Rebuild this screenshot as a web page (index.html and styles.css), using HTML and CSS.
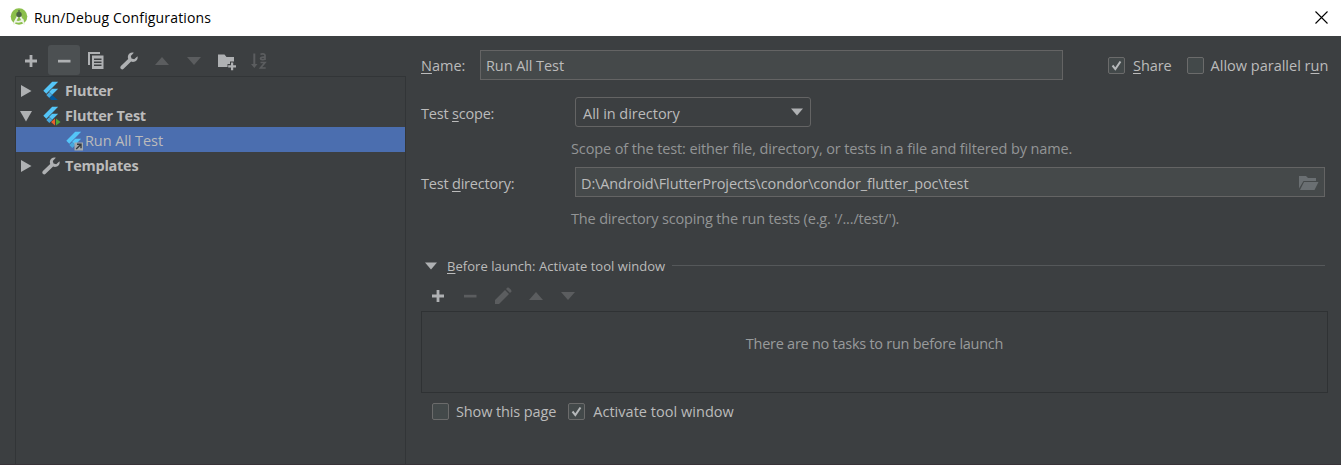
FILE: index.html
```html
<!DOCTYPE html>
<html lang="en">
<head>
<meta charset="utf-8">
<title>Run/Debug Configurations</title>
<link rel="stylesheet" href="styles.css">
</head>
<body>
<svg width="0" height="0" class="defs">
  <symbol id="plus" viewBox="0 0 20 20"><path d="M8.600 4h2.800v4.600H16v2.800h-4.600V16H8.600v-4.600H4V8.600h4.600z"/></symbol>
  <symbol id="minus" viewBox="0 0 20 20"><path d="M4 8.800h12.500v2.700H4z"/></symbol>
  <symbol id="up" viewBox="0 0 20 20"><path d="M10 6l7 8H3z"/></symbol>
  <symbol id="down" viewBox="0 0 20 20"><path d="M3 6h14l-7 8z"/></symbol>
  <symbol id="wrench" viewBox="0 0 20 20"><path d="M18.500 5.300l-3.300 2.900-2.700-.6-.7-2.700 3-3.200C12.300.9 9.300 2.300 8.900 5.200c-.2 1 0 1.900.3 2.700L1.900 15c-.8.9-.8 2 0 2.800s1.900.8 2.700 0l7.500-7.200c3.700 1.300 7.400-1.500 6.400-5.300z"/></symbol>
  <symbol id="flutter-wings" viewBox="0 0 20 20">
    <path fill="#54c5f8" d="M11.200.8h6L5.300 12.700 2.300 9.700z"/>
    <path fill="#54c5f8" d="M11.200 7.800h6l-6 6-3-3z"/>
    <path fill="#46a9de" d="M5.300 14.100l3-3 3 3-3 3z"/>
  </symbol>
</svg>

<header class="titlebar">
  <svg class="logo" viewBox="0 0 20 20">
    <circle cx="10" cy="9.500" r="8.300" fill="#8bbf4b"/>
    <path fill="none" stroke="#eef3e8" stroke-width="1.800" d="M9 9L4.500 17.500M11 9l4.500 8.500M5.500 13.500c3 2 6 2 9-1"/>
    <circle cx="10" cy="7.500" r="2.700" fill="#4d6543"/><path stroke="#4d6543" stroke-width="1.300" d="M10 3v5"/>
  </svg>
  <h1 class="title">Run/Debug Configurations</h1>
  <svg class="close" viewBox="0 0 13 13"><path fill="none" stroke="#000" stroke-width="1.100" d="M.5.5l12 12M12.500.5l-12 12"/></svg>
</header>

<main class="dialog">
  <aside class="sidebar">
    <div class="toolbar">
      <span class="tool"><svg><use href="#plus"/></svg></span>
      <span class="tool hover"><svg><use href="#minus"/></svg></span>
      <span class="tool"><svg viewBox="0 0 20 20"><path d="M2 1h12v2H4v11H2z"/><path fill-rule="evenodd" d="M6 4.500h11.500v13.500H6zM8 7.500v1.500h7.500V7.500zm0 3v1.500h7.500v-1.500zm0 3V15h7.500v-1.500z"/></svg></span>
      <span class="tool"><svg><use href="#wrench"/></svg></span>
      <span class="tool off"><svg><use href="#up"/></svg></span>
      <span class="tool off"><svg><use href="#down"/></svg></span>
      <span class="tool"><svg viewBox="0 0 20 20"><path d="M1 3.500h6.500l2 2.500H17v4.500h-4V13h-2.500v3H1z"/><path d="M14 11.500h2.200V14.200H19v2.200h-2.800v2.800H14v-2.800h-2.800v-2.200H14z"/></svg></span>
      <span class="tool off"><svg viewBox="0 0 20 20"><path d="M4.300 2.500h2V13h2.200l-3.200 4L2 13h2.300z"/><path class="sort-line" d="M11.500 3.500c1-1 4.500-1 4.500.8V9m0-2.800c-2-.2-4.500 0-4.500 1.400s3.500 1.700 4.500 0M11.500 11.500h4.500L11.500 17h5.200"/></svg></span>
    </div>
    <ul class="tree">
      <li class="node"><svg class="arrow" viewBox="0 0 12 12"><path d="M1 0l10.500 6L1 12z"/></svg><svg class="node-icon" viewBox="0 0 20 20"><use href="#flutter-wings"/><path fill="#01579b" d="M8.300 17.100l3-3 5.500 5h-6.500z"/></svg><b>Flutter</b></li>
      <li class="node"><svg class="arrow" viewBox="0 0 12 12"><path d="M0 1h12L6 11.500z"/></svg><svg class="node-icon" viewBox="0 0 20 20"><use href="#flutter-wings"/><path fill="#e8602c" d="M14 12.500v7L10 16z"/><path fill="#4fa836" d="M15 12.500v7l4.500-3.500z"/></svg><b>Flutter Test</b></li>
      <li class="node selected"><svg class="node-icon" viewBox="0 0 20 20"><use href="#flutter-wings"/><path fill="#a3a8ac" d="M10.500 11.500h8.500v8h-8.500z"/><path fill="none" stroke="#343a40" stroke-width="1.400" d="M12.200 18l4.500-4.500M13 13.200h4v4"/></svg><span class="t-run">Run All Test</span></li>
      <li class="node"><svg class="arrow" viewBox="0 0 12 12"><path d="M1 0l10.500 6L1 12z"/></svg><svg class="node-icon"><use href="#wrench"/></svg><b>Templates</b></li>
    </ul>
  </aside>

  <section class="editor">
    <div class="name-row">
      <label class="label-name"><u>N</u>ame:</label>
      <div class="field name-field"><span class="t-name">Run All Test</span></div>
      <span class="check share"><i class="box"><svg viewBox="0 0 17 17"><path d="M4 8.500l3.200 4L13 4"/></svg></i><span class="t-share"><u>S</u>hare</span></span>
      <span class="check"><i class="box"></i><span>Allow parallel r<u>u</u>n</span></span>
    </div>
    <div class="form-row">
      <label>Test <u>s</u>cope:</label>
      <div class="select"><span>All in directory</span><svg viewBox="0 0 12 8"><path d="M0 .5h12L6 7.500z"/></svg></div>
    </div>
    <p class="hint">Scope of the test: either file, directory, or tests in a file and filtered by name.</p>
    <div class="form-row dir-row">
      <label>Test <u>d</u>irectory:</label>
      <div class="field dir-field"><span class="t-path">D:\Android\FlutterProjects\condor\condor_flutter_poc\test</span><svg viewBox="0 0 20 16"><path d="M0 1h7l2 2h8v3H4.500L0 13.500z"/><path d="M5 7h14.500l-4 8H1z"/></svg></div>
    </div>
    <p class="hint hint-dir">The directory scoping the run tests (e.g. '/.../test/').</p>
    <div class="divider"><svg viewBox="0 0 12 8"><path d="M0 .5h12L6 7.500z"/></svg><span class="t-before"><u>B</u>efore launch: Activate tool window</span><hr></div>
    <div class="toolbar tasks-bar">
      <span class="tool"><svg><use href="#plus"/></svg></span>
      <span class="tool off"><svg><use href="#minus"/></svg></span>
      <span class="tool off"><svg viewBox="0 0 20 20"><path d="M2 14L12 4l4 4L6 18H2zM13 3l1.500-1.500c1-.8 4.800 3 4 4L17 7z"/></svg></span>
      <span class="tool off"><svg><use href="#up"/></svg></span>
      <span class="tool off"><svg><use href="#down"/></svg></span>
    </div>
    <div class="tasks"><span>There are no tasks to run before launch</span></div>
    <div class="options">
      <span class="check"><i class="box"></i><span class="t-show">Show this page</span></span>
      <span class="check"><i class="box"><svg viewBox="0 0 17 17"><path d="M4 8.500l3.200 4L13 4"/></svg></i><span class="t-activate">Activate tool window</span></span>
    </div>
  </section>
</main>
</body>
</html>
```
FILE: styles.css
```css
* { box-sizing: border-box; }
body {
  margin: 0; height: 465px; overflow: hidden;
  display: flex; flex-direction: column;
  background: #3c3f41; color: #bbb;
  font: 14.500px/20px "Open Sans", "Noto Sans", sans-serif;
  white-space: nowrap;
}
svg { flex: none; fill: #afb1b3; }
u { text-underline-offset: 2px; text-decoration-thickness: 1px; text-decoration-skip-ink: none; }
.defs { position: absolute; }

.titlebar { flex: none; height: 36px; display: flex; align-items: center; padding: 0 13px 2px 9px; background: #fff; color: #000; }
.logo { width: 20px; height: 20px; }
.title { margin: 2px 0 0 5px; font-size: 14px; font-weight: 400; letter-spacing: .16px; }
.close { width: 13px; height: 13px; margin-left: auto; }

.dialog { flex: 1; display: flex; border-bottom: 1px solid #383338; }
.sidebar { flex: none; width: 406px; padding: 9px 0 0 15px; display: flex; flex-direction: column; }
.toolbar { flex: none; display: flex; height: 31px; }
.tool { width: 32.600px; height: 30px; display: flex; align-items: center; justify-content: center; padding-top: 1px; border-radius: 3px; }
.tool svg { width: 20px; height: 20px; }
.tool.hover { background: #4c5052; }
.off svg { fill: #5b5d5f; }
.off .sort-line { fill: none; stroke: #5b5d5f; stroke-width: 1.700; }

.tree { flex: 1; margin: 0; padding: 0; list-style: none; border: solid #323537; border-width: 1px 1px 0; }
.node { height: 25px; display: flex; align-items: center; padding: 2px 0 0 4px; }
.node b { letter-spacing: -.25px; }
.arrow { width: 12px; height: 12px; margin-right: 9px; }
.node-icon { width: 20px; height: 20px; margin-right: 4px; }
.selected { background: #4b6eaf; padding-left: 48px; }
.selected .node-icon { margin-right: 1px; }
.t-run, .t-name, .t-share { letter-spacing: -.08px; }

.editor { flex: 1; padding: 14px 0 0 15px; }
.name-row { display: flex; align-items: center; height: 30px; }
.label-name { width: 59px; }
.label-name, .field span, .select span, .check > span, .form-row label { padding-top: 1px; }
.field { height: 30px; display: flex; align-items: center; padding: 0 5px; background: #45494a; border: 1px solid #646464; }
.name-field { width: 583px; margin-right: 45px; }
.check { display: flex; align-items: center; gap: 7px; }
.share { margin-right: 15px; gap: 8px; }
.box { width: 17px; height: 17px; display: block; border: 1px solid #6b6b6b; border-radius: 2px; background: #43494a; }
.box svg { display: block; width: 15px; height: 15px; fill: none; stroke: #b5b8ba; stroke-width: 2.300; }
.form-row { display: flex; align-items: center; height: 30px; margin-top: 17px; }
.form-row label { width: 154px; padding-top: 3px; letter-spacing: -.2px; }
.select { width: 236px; height: 30px; display: flex; align-items: center; justify-content: space-between; padding: 0 7px; border: 1px solid #646464; border-radius: 3px; }
.select span { padding-top: 3px; letter-spacing: -.03px; }
.select svg { width: 12px; height: 8px; }
.hint { margin: 12px 0 0 150px; color: #939596; letter-spacing: -.12px; }
.hint-dir { margin-top: 12px; letter-spacing: -.16px; }
.dir-row { margin-top: 8px; }
.dir-field { width: 750px; justify-content: space-between; }
.field .t-path { padding-top: 3px; letter-spacing: -.12px; }
.dir-field svg { width: 20px; height: 16px; margin-top: 2px; fill: #6a6f72; }
.divider { display: flex; align-items: center; height: 20px; margin: 27px 16px 0 4px; font-size: 13px; }
.divider svg { width: 12px; height: 8px; margin-right: 10px; }
.divider hr { flex: 1; margin: 0 0 2px 7px; border: 0; border-top: 1px solid #55585a; }
.t-before { letter-spacing: .04px; }
.tasks-bar { height: 30px; margin-top: 4px; padding-left: .5px; }
.tasks { width: 907px; height: 82px; display: flex; justify-content: center; padding-top: 22px; margin-top: 1px; border: 1px solid #2f3234; color: #999b9c; letter-spacing: -.26px; }
.options { display: flex; gap: 12px; margin: 8px 0 0 11px; }
.t-show { letter-spacing: -.12px; }
.t-activate { letter-spacing: .03px; }
.options .check + .check { gap: 8px; }
```
